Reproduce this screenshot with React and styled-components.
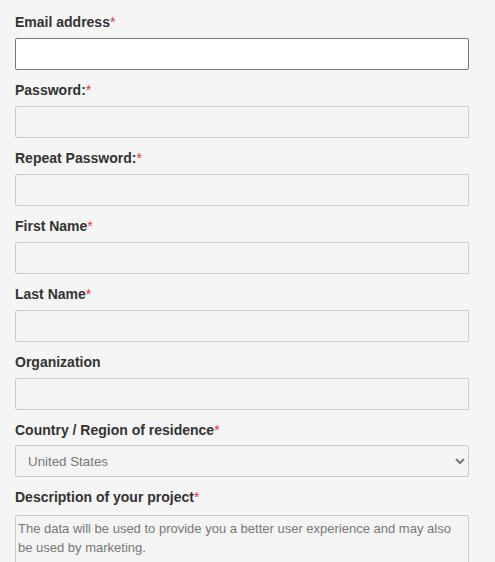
import styled, { createGlobalStyle } from 'styled-components';

const GlobalStyle = createGlobalStyle`
  body {
    margin: 0;
    background: #f5f5f5;
    font-family: "Liberation Sans", Arial, sans-serif;
  }
`;

export default function App() {
  return (
    <>
      <GlobalStyle />
      <Form autoComplete="off">
        <Field>
          <Label htmlFor="email">
            Email address<Req>*</Req>
          </Label>
          <Input id="email" type="email" $focused />
        </Field>

        <Field>
          <Label htmlFor="pw">
            Password:<Req>*</Req>
          </Label>
          <Input id="pw" type="password" />
        </Field>

        <Field>
          <Label htmlFor="pw2">
            Repeat Password:<Req>*</Req>
          </Label>
          <Input id="pw2" type="password" />
        </Field>

        <Field>
          <Label htmlFor="first">
            First Name<Req>*</Req>
          </Label>
          <Input id="first" type="text" />
        </Field>

        <Field>
          <Label htmlFor="last">
            Last Name<Req>*</Req>
          </Label>
          <Input id="last" type="text" />
        </Field>

        <Field>
          <Label htmlFor="org">Organization</Label>
          <Input id="org" type="text" />
        </Field>

        <Field $gap={5}>
          <Label htmlFor="country">
            Country / Region of residence<Req>*</Req>
          </Label>
          <Select id="country" defaultValue="us">
            <option value="us">United States</option>
          </Select>
        </Field>

        <Field $gap={8}>
          <Label htmlFor="desc">
            Description of your project<Req>*</Req>
          </Label>
          <TextArea
            id="desc"
            placeholder="The data will be used to provide you a better user experience and may also be used by marketing."
          />
        </Field>
      </Form>
    </>
  );
}

//Styled-Component
const Form = styled.form`
  display: flex;
  flex-direction: column;
  gap: 10px;
  padding: 12px 0 0 15px;
  width: 454px;
`;

const Field = styled.div`
  display: flex;
  flex-direction: column;
  gap: ${(p) => p.$gap ?? 6}px;
`;

const Label = styled.label`
  font-size: 14px;
  line-height: 20px;
  font-weight: bold;
  color: #333;
`;

const Req = styled.span`
  color: #f0303a;
  font-weight: normal;
`;

const Input = styled.input`
  box-sizing: border-box;
  width: 100%;
  height: 32px;
  margin: 0;
  padding: 4px 6px;
  font: inherit;
  font-size: 14px;
  border-radius: 2px;
  outline: none;
  border: 1px solid ${(p) => (p.$focused ? '#767676' : '#cccccc')};
  background: ${(p) => (p.$focused ? '#ffffff' : '#f4f4f4')};
`;

const Select = styled.select`
  box-sizing: border-box;
  width: 100%;
  height: 32px;
  margin: 0;
  padding: 0 6px 0 8px;
  font: inherit;
  font-size: 13.33px;
  color: #777;
  border-radius: 2px;
  border: 1px solid #cccccc;
  background-color: #f4f4f4;
  outline: none;
`;

const TextArea = styled.textarea`
  box-sizing: border-box;
  width: 100%;
  height: 90px;
  margin: 0;
  padding: 3px 2px;
  font: inherit;
  font-size: 13px;
  line-height: 19px;
  border-radius: 2px;
  border: 1px solid #cccccc;
  background: #f4f4f4;
  resize: none;
  outline: none;

  &::placeholder {
    color: #777;
  }
`;
